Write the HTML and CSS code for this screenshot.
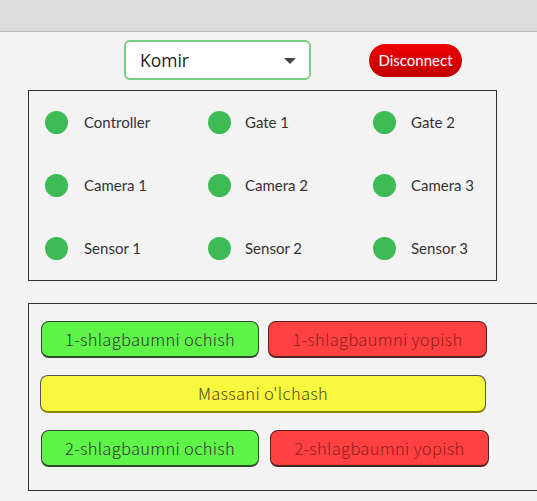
FILE: index.html
```html
<!DOCTYPE html>
<html>
<head>
<meta charset="utf-8">
<link rel="stylesheet" href="styles.css">
</head>
<body>
<div class="topbar"></div>
<div class="header">
  <div class="select">
    <span class="select-text">Komir</span>
    <span class="caret"></span>
  </div>
  <button class="disconnect">Disconnect</button>
</div>
<div class="status-panel">
  <div class="status"><span class="dot"></span><span class="label">Controller</span></div>
  <div class="status"><span class="dot"></span><span class="label">Gate 1</span></div>
  <div class="status"><span class="dot"></span><span class="label">Gate 2</span></div>
  <div class="status"><span class="dot"></span><span class="label">Camera 1</span></div>
  <div class="status"><span class="dot"></span><span class="label">Camera 2</span></div>
  <div class="status"><span class="dot"></span><span class="label">Camera 3</span></div>
  <div class="status"><span class="dot"></span><span class="label">Sensor 1</span></div>
  <div class="status"><span class="dot"></span><span class="label">Sensor 2</span></div>
  <div class="status"><span class="dot"></span><span class="label">Sensor 3</span></div>
</div>
<div class="control-panel">
  <div class="row">
    <button class="btn green w1">1-shlagbaumni ochish</button>
    <button class="btn red w2">1-shlagbaumni yopish</button>
  </div>
  <div class="row full">
    <button class="btn yellow wide">Massani o'lchash</button>
  </div>
  <div class="row">
    <button class="btn green w1">2-shlagbaumni ochish</button>
    <button class="btn red w2 gap2">2-shlagbaumni yopish</button>
  </div>
</div>
</body>
</html>
```
FILE: styles.css
```css
html, body {
  margin: 0;
  padding: 0;
}
body {
  background: #f3f3f3;
  width: 537px;
  height: 501px;
  overflow: hidden;
  font-family: "Lato", "Open Sans", sans-serif;
}
.topbar {
  height: 31px;
  background: #dcdcdc;
  border-bottom: 1px solid #b9b9b9;
}
.header {
  display: flex;
  align-items: flex-start;
  padding-left: 124px;
  height: 58px;
}
.select {
  margin-top: 8px;
  height: 36px;
  border: 2px solid #7ccc82;
  border-radius: 6px;
  background: #fff;
  display: flex;
  align-items: center;
  justify-content: space-between;
  padding: 0 13px 0 14px;
  box-sizing: content-box;
  width: 156px;
}
.select-text {
  font-family: "Open Sans", sans-serif;
  font-size: 17.5px;
  color: #222;
  margin-top: -1px;
}
.caret {
  width: 0;
  height: 0;
  border-left: 6px solid transparent;
  border-right: 6px solid transparent;
  border-top: 6px solid #444;
  margin-top: 1px;
}
.disconnect {
  margin-top: 12px;
  margin-left: 58px;
  width: 93px;
  height: 33px;
  border: none;
  border-radius: 17px;
  background: linear-gradient(#ee0000, #c00000);
  color: #fff;
  font-family: "Lato", sans-serif;
  font-size: 15px;
  padding: 0 0 2px;
}
.status-panel {
  margin-left: 28px;
  border: 1px solid #333;
  display: grid;
  grid-template-columns: 163px 165px 1fr;
  grid-auto-rows: 63px;
  padding: 0 0 0 16px;
  box-sizing: content-box;
  width: 451px;
}
.status {
  display: flex;
  align-items: center;
  gap: 14px;
}
.status:nth-child(3n+1) {
  gap: 16px;
}
.status:nth-child(3n) {
  gap: 15px;
}
.dot {
  width: 23px;
  height: 23px;
  border-radius: 50%;
  background: #3dbb55;
  flex: none;
}
.label {
  font-size: 15px;
  color: #333;
  margin-top: -1px;
}
.control-panel {
  margin-top: 22px;
  margin-left: 28px;
  width: 497px;
  border: 1px solid #333;
  border-right: none;
  padding: 17px 0 23px 11px;
  display: flex;
  flex-direction: column;
  gap: 17px;
}
.row {
  display: flex;
  gap: 9px;
  padding-left: 1px;
}
.row.full {
  padding-left: 0;
}
.btn {
  font-family: "Noto Sans CJK JP", sans-serif;
  font-size: 16.5px;
  font-weight: 300;
  letter-spacing: 0.3px;
  height: 37px;
  border: 1px solid #333;
  border-bottom-width: 2px;
  border-radius: 8px;
  padding: 0 0 1px;
}
.w1 { width: 218px; }
.w2 { width: 219px; }
.gap2 { margin-left: 2px; }
.wide { width: 446px; height: 38px; }
.green {
  background: #5ff548;
  color: #333;
  border-color: #2f4a2a;
}
.red {
  background: #ff4141;
  color: #8a1f1f;
  border-color: #552222;
}
.yellow {
  background: #f8f83e;
  color: #4a4a10;
  border-color: #555;
  border-bottom-color: #888800;
}
```
